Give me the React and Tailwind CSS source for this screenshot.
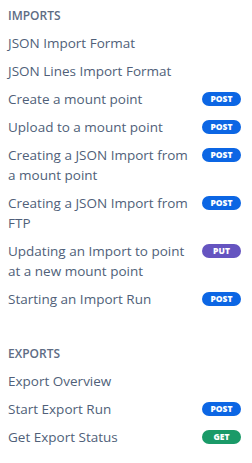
import React from "react";

const Badge = ({ m }) => {
  const cls =
    m === "POST"
      ? "bg-[#0c66e4]"
      : m === "PUT"
      ? "bg-[#6554c0]"
      : "bg-[#1a9a68]";
  return (
    <span
      className={`${cls} mt-[3px] flex h-[14px] w-[39px] shrink-0 items-center justify-center rounded-full text-[8.5px] font-extrabold leading-none text-white`}
    >
      {m}
    </span>
  );
};

const Item = ({ label, m }) => (
  <div className="flex items-start justify-between py-1 pl-2 pr-[11px]">
    <span className="w-[182px] text-[13.5px] leading-[20px] text-[#505f79]">{label}</span>
    {m && <Badge m={m} />}
  </div>
);

const Header = ({ children }) => (
  <div className="px-2 pb-[3px] text-[12px] font-semibold leading-[20px] text-[#5e6c84]">
    {children}
  </div>
);

export default function App() {
  return (
    <div
      className="h-[463px] w-[252px] bg-white pt-[6px]"
      style={{ fontFamily: '"Open Sans", "Noto Sans", sans-serif' }}
    >
      <Header>IMPORTS</Header>
      <Item label="JSON Import Format" />
      <Item label="JSON Lines Import Format" />
      <Item label="Create a mount point" m="POST" />
      <Item label="Upload to a mount point" m="POST" />
      <Item label="Creating a JSON Import from a mount point" m="POST" />
      <Item label="Creating a JSON Import from FTP" m="POST" />
      <Item label="Updating an Import to point at a new mount point" m="PUT" />
      <Item label="Starting an Import Run" m="POST" />
      <div className="h-[31px]" />
      <Header>EXPORTS</Header>
      <Item label="Export Overview" />
      <Item label="Start Export Run" m="POST" />
      <Item label="Get Export Status" m="GET" />
    </div>
  );
}
